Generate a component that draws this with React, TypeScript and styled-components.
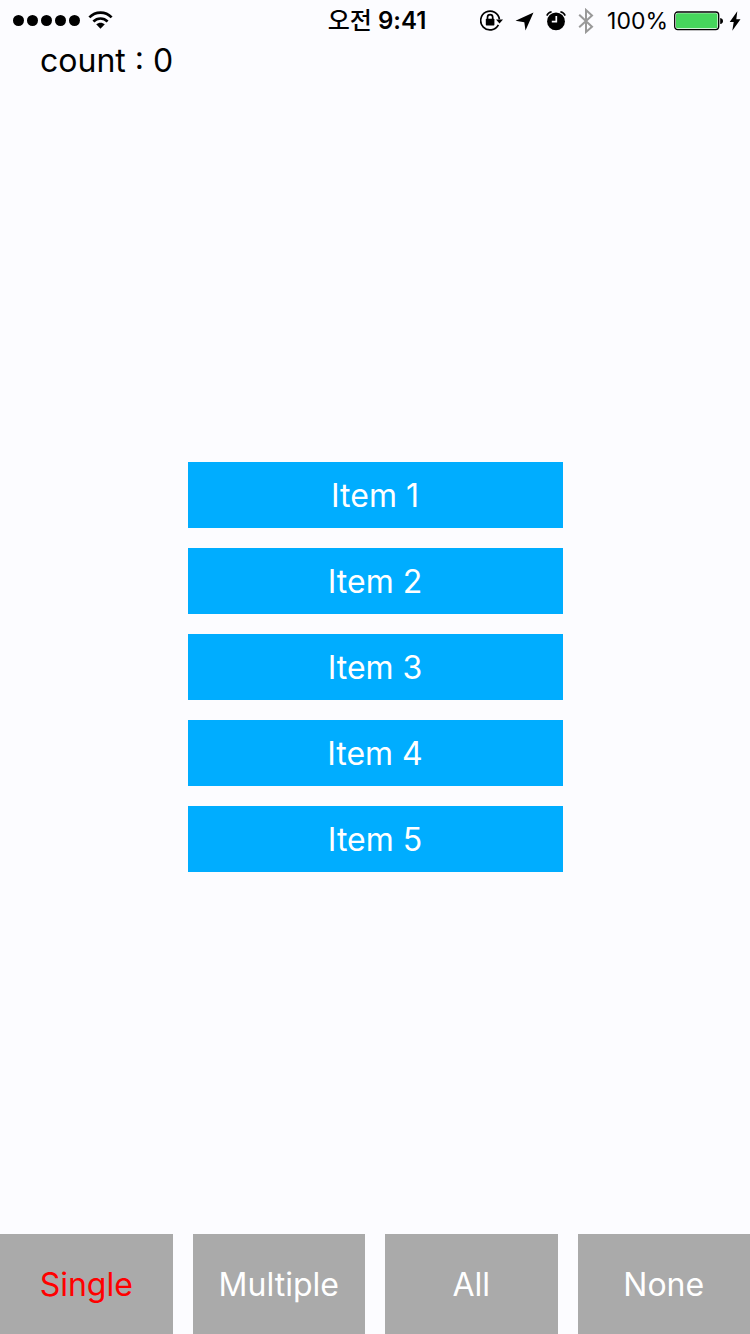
import React, { useState } from "react";
import styled, { createGlobalStyle } from "styled-components";

const GlobalStyle = createGlobalStyle`
  * { box-sizing: border-box; }
  body {
    margin: 0;
    background: #fcfcff;
    color: #000;
    font-family: Inter, "Noto Sans CJK KR", sans-serif;
  }
`;

const Screen = styled.div`
  display: grid;
  grid-template-rows: 100px 1fr 100px;
  min-height: 100vh;
`;

const StatusBar = styled.div`
  display: grid;
  grid-template-columns: 1fr auto 1fr;
  align-items: center;
  height: 42px;
  padding: 0 9px 0 13px;
`;

const StatusGroup = styled.div<{ $end?: boolean }>`
  display: flex;
  align-items: center;
  justify-content: ${(p) => (p.$end ? "flex-end" : "flex-start")};
  gap: ${(p) => (p.$end ? 6 : 8)}px;
`;

const SystemIcons = styled.div`
  display: flex;
  align-items: center;
  gap: 12px;
  margin-right: 7px;
`;

const Clock = styled.time`
  font-size: 24px;
  line-height: 40px;
  font-weight: 600;
  white-space: nowrap;
`;

const Meridiem = styled.span`
  font-weight: 500;
`;

const Battery = styled.span`
  font-size: 23px;
  line-height: 40px;
`;

const Counter = styled.div`
  padding: 0 40px;
  font-size: 32px;
  line-height: 38px;
`;

const Main = styled.main`
  display: flex;
  align-items: center;
  justify-content: center;
`;

const ItemList = styled.div`
  display: flex;
  flex-direction: column;
  gap: 20px;
  width: 50%;
`;

const BaseButton = styled.button`
  border: 0;
  padding: 2px 0 0;
  color: #fff;
  font-family: inherit;
  font-size: 32px;
  line-height: 40px;
  cursor: pointer;
`;

const ItemButton = styled(BaseButton)<{ $selected: boolean }>`
  height: 66px;
  background: ${(p) => (p.$selected ? "#ff0000" : "#00adff")};
`;

const ModeBar = styled.footer`
  display: grid;
  grid-template-columns: repeat(4, 1fr);
  gap: 20px;
`;

const ModeButton = styled(BaseButton)<{ $active: boolean }>`
  background: #aaaaaa;
  color: ${(p) => (p.$active ? "#ff0000" : "#fff")};
`;

const SignalIcon = () => (
  <svg width="67" height="12" viewBox="0 0 67 12" aria-hidden="true">
    {[5.5, 19.5, 33.5, 47.5, 61.5].map((x) => (
      <circle key={x} cx={x} cy="5.5" r="5.5" />
    ))}
  </svg>
);

const WifiIcon = () => (
  <svg width="25" height="20" viewBox="0 0 25 20" aria-hidden="true">
    <path d="M1.4 6.4C7.5 0 17.5 0 23.6 6.4" fill="none" stroke="#000" strokeWidth="2.7" />
    <path d="M5.4 10.5c4-4.1 10.2-4.1 14.2 0" fill="none" stroke="#000" strokeWidth="2.6" />
    <path d="M8.2 13.3c2.5-2.2 6.1-2.2 8.6 0L12.5 17.8z" />
  </svg>
);

const RotationLockIcon = () => (
  <svg width="23" height="22" viewBox="0 0 23 22" aria-hidden="true">
    <path d="M19.4 9.4A9.4 9.4 0 1 0 18.4 14.9" fill="none" stroke="#000" strokeWidth="1.7" />
    <path d="M16 9.400H23L19.500 13.600z" />
    <rect x="5.800" y="8.800" width="8.600" height="6.600" rx=".7" />
    <path d="M7.500 9.500V7.200a2.600 2.600 0 0 1 5.200 0V9.500" fill="none" stroke="#000" strokeWidth="1.700" />
  </svg>
);

const LocationIcon = () => (
  <svg width="19" height="19" viewBox="0 0 19 19" aria-hidden="true">
    <path d="M18.500.5L10.500 18.500 9.300 10.300.5 8.800z" />
  </svg>
);

const AlarmIcon = () => (
  <svg width="20" height="20" viewBox="0 0 20 20" aria-hidden="true">
    <circle cx="10" cy="10.400" r="8.900" />
    <path d="M.8 4.600Q2 1.600 5.600.8M19.200 4.600Q18 1.600 14.400.8" fill="none" stroke="#000" strokeWidth="1.500" />
    <path d="M10.300 5V10.700H5.800" fill="none" stroke="#fcfcff" strokeWidth="1.700" />
  </svg>
);

const BluetoothIcon = () => (
  <svg width="16" height="26" viewBox="0 0 16 26" aria-hidden="true">
    <path d="M1.200 6.800L14 18.800 8 24V2l6 5.400L1.200 19.200" fill="none" stroke="#999" strokeWidth="2" />
  </svg>
);

const BatteryIcon = () => (
  <svg width="49" height="20" viewBox="0 0 49 20" aria-hidden="true">
    <rect x=".7" y="1" width="44" height="17.600" rx="3" fill="#fff" stroke="#000" strokeWidth="1.300" />
    <rect x="2" y="2.300" width="41.400" height="15" rx="1.500" fill="#46d65c" />
    <path d="M46.200 7q2.800.5 2.800 3t-2.800 3z" />
  </svg>
);

const BoltIcon = () => (
  <svg width="12" height="20" viewBox="0 0 12 20" aria-hidden="true">
    <path d="M8.300.3L.7 11h4L3.300 19.700 11.500 8.300H7.300z" />
  </svg>
);

const items = [1, 2, 3, 4, 5];
const modes = ["Single", "Multiple", "All", "None"];

export default function App() {
  const [mode, setMode] = useState("Single");
  const [selected, setSelected] = useState<number[]>([]);

  const changeMode = (next: string) => {
    setMode(next);
    setSelected(next === "All" ? items : []);
  };

  const toggle = (item: number) => {
    if (mode === "None" || mode === "All") return;
    setSelected((current) => {
      if (current.includes(item)) return current.filter((i) => i !== item);
      return mode === "Single" ? [item] : [...current, item];
    });
  };

  return (
    <>
      <GlobalStyle />
      <Screen>
        <header>
          <StatusBar>
            <StatusGroup>
              <SignalIcon />
              <WifiIcon />
            </StatusGroup>
            <Clock>
              <Meridiem>오전</Meridiem> 9:41
            </Clock>
            <StatusGroup $end>
              <SystemIcons>
                <RotationLockIcon />
                <LocationIcon />
                <AlarmIcon />
                <BluetoothIcon />
              </SystemIcons>
              <Battery>100%</Battery>
              <BatteryIcon />
              <BoltIcon />
            </StatusGroup>
          </StatusBar>
          <Counter>count : {selected.length}</Counter>
        </header>
        <Main>
          <ItemList>
            {items.map((item) => (
              <ItemButton
                key={item}
                type="button"
                aria-pressed={selected.includes(item)}
                $selected={selected.includes(item)}
                onClick={() => toggle(item)}
              >
                Item {item}
              </ItemButton>
            ))}
          </ItemList>
        </Main>
        <ModeBar>
          {modes.map((name) => (
            <ModeButton
              key={name}
              type="button"
              aria-pressed={mode === name}
              $active={mode === name}
              onClick={() => changeMode(name)}
            >
              {name}
            </ModeButton>
          ))}
        </ModeBar>
      </Screen>
    </>
  );
}
